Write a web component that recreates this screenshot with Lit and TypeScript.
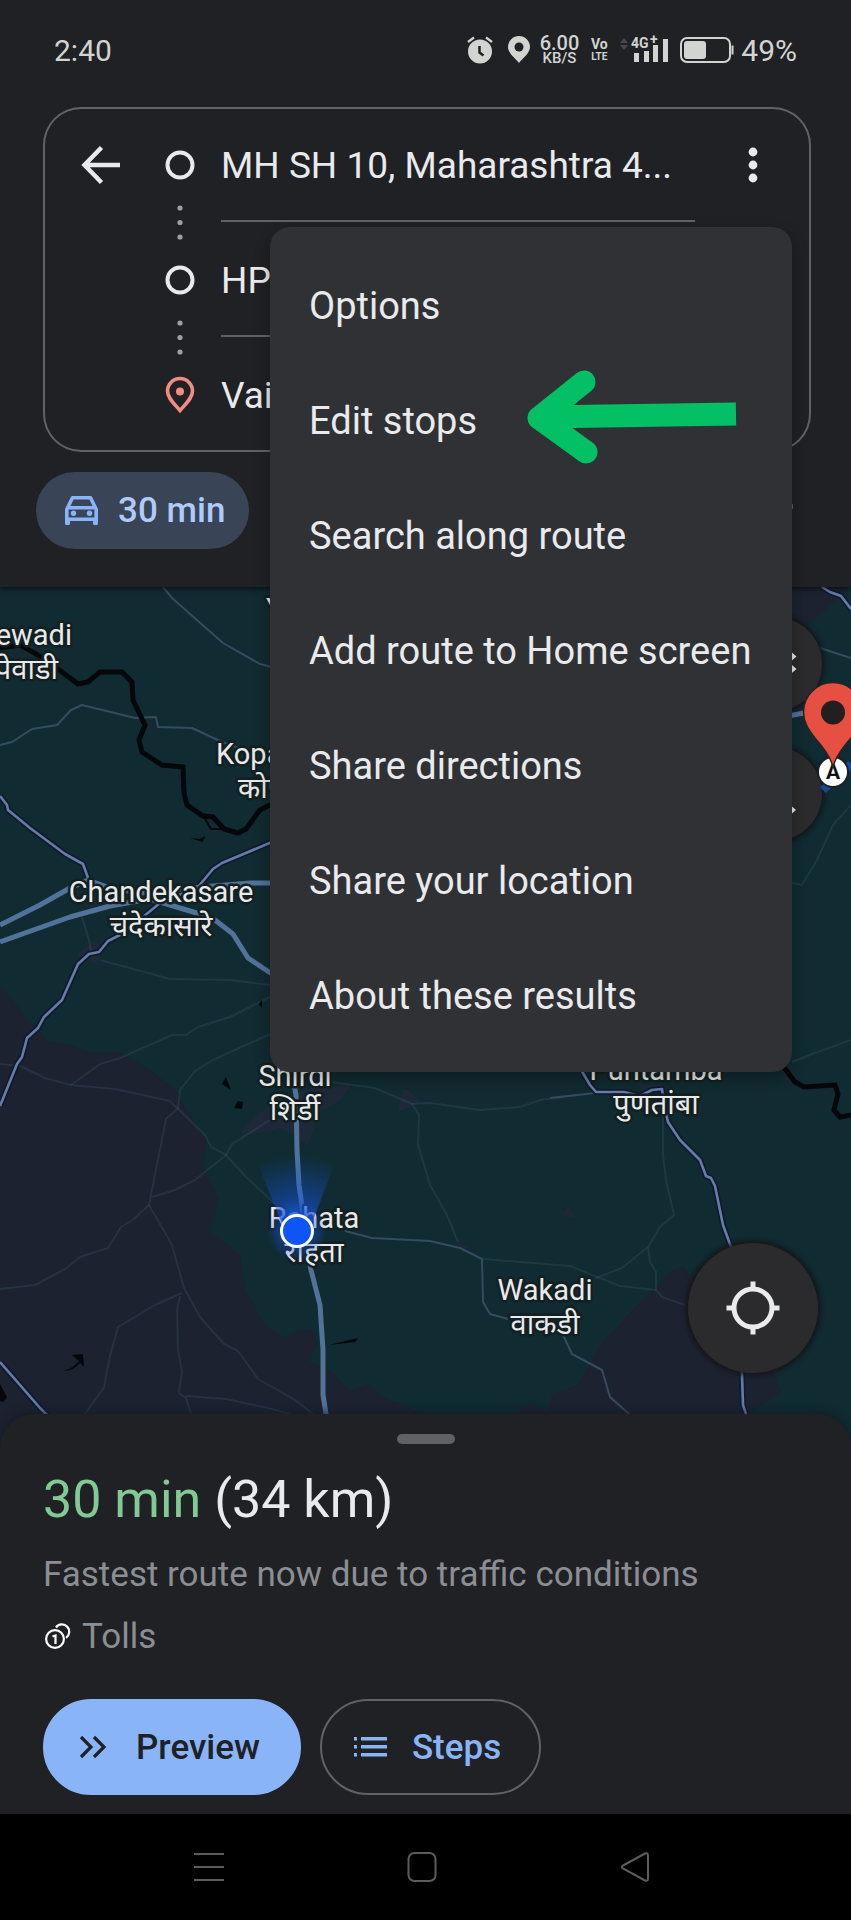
import { LitElement, html, svg, css } from "lit";
import { customElement, property } from "lit/decorators.js";

interface Place {
  name: string;
  local: string;
  x: number;
  y: number;
  localX?: number;
  anchor?: "start" | "middle" | "end";
}

const PLACES: Place[] = [
  { name: "ewadi", local: "पेवाडी", x: 72, localX: 58, y: 645, anchor: "end" },
  { name: "Kopa", local: "कोप", x: 216, localX: 238, y: 764, anchor: "start" },
  { name: "Chandekasare", local: "चंदेकासारे", x: 161, y: 902 },
  { name: "Shirdi", local: "शिर्डी", x: 295, y: 1086 },
  { name: "Puntamba", local: "पुणतांबा", x: 656, y: 1080 },
  { name: "Rahata", local: "राहता", x: 314, y: 1228 },
  { name: "Wakadi", local: "वाकडी", x: 545, y: 1300 },
];

const FAINT = [
  "M0 1064L20 1066L45 1078L71 1085L115 1089L170 1101L205 1135L211 1147L226 1155L245 1176L275 1204",
  "M71 1085L100 1064L120 1058L172 1035L186 1035L198 1027L230 1017L270 997",
  "M270 1034L213 1060L195 1071L180 1090L178 1108L166 1119L152 1190L149 1205L172 1245L184 1288L200 1317L224 1344L238 1351L258 1379L295 1400L313 1414",
  "M149 1205L134 1219L121 1227L108 1248L80 1257L65 1269L35 1285L0 1289",
  "M152 1197L175 1190L195 1180L226 1155L232 1144L270 1120",
  "M182 1293L155 1305L118 1327L109 1360L104 1387L85 1414",
  "M180 1296L177 1310L178 1350L182 1372L179 1393L186 1398L191 1414",
  "M186 1396L226 1399L268 1408L290 1414",
  "M330 1082L375 1088L412 1104L419 1115L418 1145L430 1185L447 1215L458 1242",
  "M412 1104L430 1103L480 1110L520 1107L540 1100L565 1097",
  "M663 1115L663 1155L666 1180L674 1215L660 1227L648 1247L622 1268L596 1278",
  "M483 1259L570 1266L620 1286L656 1290L662 1297L685 1305",
  "M648 1247L650 1262L656 1272L656 1290",
  "M792 1062L815 1053L851 1040",
  "M100 960L170 979L230 980L270 985",
  "M792 883L802 885L817 860L833 825L851 805",
  "M82 917L89 940L92 955",
];

const MINOR = [
  "M163 587L172 598L223 643L260 664L272 667",
  "M0 745L12 742L32 729L57 725L71 710L82 705L135 718L156 717L158 727L192 728L222 742L250 752",
  "M345 1231L372 1238L430 1241L460 1248L482 1259L483 1302L490 1314L508 1319",
  "M563 1335L572 1354L602 1370L610 1397L629 1414L640 1424",
  "M550 1098L595 1093",
  "M820 648L851 658",
];

const ROADS = [
  "M0 796L7 805L8 810L30 828L65 854L83 864L88 878",
  "M272 842L222 863L213 869L198 887L160 903L143 917L122 934L108 941L99 952L89 954L78 964L62 1000L44 1017L38 1028L27 1038L22 1057L17 1064L0 1106",
  "M580 1068L590 1085L596 1092L624 1092L640 1096L652 1090L662 1089L664 1105L668 1122L680 1140L700 1160L706 1176L711 1178L715 1186L723 1225L731 1247L738 1290L742 1375L743 1405L748 1420",
  "M0 1362L40 1408L52 1420",
  "M822 587L830 592L841 596L851 609",
];

const HIGHWAYS = [
  "M0 925L40 905L70 888L88 880L110 888L140 893L190 888L250 883L272 883",
  "M0 942L70 917L110 906L150 899L200 914L215 920L233 934L248 958L272 974",
  "M292 1072L296 1095L297 1150L299 1185L302 1206L306 1245L311 1270L320 1305L323 1350L323 1395L327 1420",
  "M788 716L804 713",
];

const RIVERS = [
  "M0 648L20 645L38 655L58 669L78 684L88 682L100 672L122 672L132 682L133 700L145 725L139 740L142 752L162 765L183 767L184 793L187 805L203 816L213 817L224 829L238 833L246 829L260 810L272 804",
  "M780 1062L795 1082L804 1087L835 1085L838 1094L834 1110L840 1117L851 1115",
];

@customElement("route-map")
export class RouteMap extends LitElement {
  static styles = css`
    :host {
      display: block;
      position: relative;
      overflow: hidden;
      background: #102b31;
    }
    .canvas {
      position: absolute;
      inset: 0;
      width: 100%;
      height: 100%;
      display: block;
    }
    .land { fill: #1c2230; }
    .town { fill: #1d2938; }
    .line { fill: none; stroke-linejoin: round; }
    .faint { stroke: #6c90ab; stroke-opacity: 0.14; stroke-width: 2; }
    .minor { stroke: #374b5e; stroke-width: 2; }
    .casing { stroke: #14182c; stroke-width: 6; }
    .road { stroke: #637da9; stroke-width: 2.6; }
    .highway { stroke: #527299; stroke-width: 5; }
    .river { stroke: #05070b; stroke-width: 5; stroke-linejoin: miter; }
    .stream { stroke: #05070b; stroke-width: 2; }
    .water { fill: #05070b; }
    .label {
      font: 29px Roboto, "Noto Sans", sans-serif;
      fill: #e8eaed;
      stroke: #14201f;
      stroke-width: 5px;
      stroke-linejoin: round;
      paint-order: stroke;
    }
    .local {
      font: 29px "Noto Sans", "Noto Sans Devanagari", sans-serif;
    }
    .round {
      position: absolute;
      display: grid;
      place-items: center;
      padding: 0;
      border: 0;
      border-radius: 50%;
      background: #2b2b2e;
      box-shadow: 0 0 4px 3px rgba(20, 20, 22, 0.8);
    }
    .small { width: 94px; height: 94px; right: 29px; }
    .layers { top: 30px; }
    .sound { top: 160px; }
    .locate { width: 130px; height: 130px; right: 33px; bottom: 73px; }
    .pin {
      position: absolute;
      right: 0;
      top: 90px;
      width: 56px;
      height: 120px;
    }
    .stop { font: 700 21px Roboto, sans-serif; fill: #111; }
  `;

  render() {
    const line = (kind: string) => (d: string) =>
      svg`<path class="line ${kind}" d=${d}></path>`;
    return html`
      <svg class="canvas" viewBox="0 587 851 859" preserveAspectRatio="xMidYMin slice" role="img" aria-label="Map">
        <defs>
          <radialGradient id="beam" gradientUnits="userSpaceOnUse" cx="297" cy="1231" r="78">
            <stop offset="0" stop-color="#1556e0" stop-opacity="0.9"></stop>
            <stop offset="0.5" stop-color="#1556e0" stop-opacity="0.4"></stop>
            <stop offset="1" stop-color="#1556e0" stop-opacity="0"></stop>
          </radialGradient>
          <radialGradient id="glow" gradientUnits="userSpaceOnUse" cx="297" cy="1231" r="30">
            <stop offset="0.5" stop-color="#1556e0" stop-opacity="0.5"></stop>
            <stop offset="1" stop-color="#1556e0" stop-opacity="0"></stop>
          </radialGradient>
        </defs>
        <path class="land" d="M0 985L12 1000L30 1022L48 1041L70 1045L90 1053L120 1052L150 1070L175 1090L190 1115L206 1140L203 1165L219 1200L210 1232L228 1245L240 1255L245 1290L265 1325L283 1338L300 1330L315 1331L317 1345L308 1362L330 1370L350 1390L368 1384L385 1398L420 1413V1450H0Z"></path>
        <path class="land" d="M645 1298L670 1272L683 1267L690 1275L775 1375L781 1392L745 1416L740 1450H518V1410L530 1404L547 1412L552 1395L578 1385L600 1345Z"></path>
        <path class="land" d="M785 587H851L811 623L785 622Z"></path>
        <path class="town" d="M242 1130L260 1112L300 1090L352 1084L340 1100L320 1112L308 1145L280 1128L245 1136L243 1150ZM400 1100L404 1088L413 1094L420 1102L398 1112ZM562 1215L568 1205L577 1218ZM455 1239L470 1248L463 1250ZM76 955L95 940L103 948L98 965ZM638 1083L660 1085L664 1092L642 1096Z"></path>
        ${FAINT.map(line("faint"))}
        ${MINOR.map(line("minor"))}
        ${RIVERS.map(line("river"))}
        <path class="water" d="M222 1084L226 1077L231 1090ZM234 1108L238 1101L243 1102L242 1109ZM259 1004L262 1000V1008ZM190 838L200 839L205 836L203 842ZM62 1371C70 1370 74 1366 79 1361L72 1355L83 1354L84 1367L80 1363C76 1368 70 1371 62 1371ZM0 1384L7 1397L3 1402L0 1401ZM329 1345L358 1338L355 1342Z"></path>
        <path class="line stream" d="M204 817L211 829H225"></path>
        ${ROADS.map(line("casing"))}
        ${ROADS.map(line("road"))}
        ${HIGHWAYS.map(line("highway"))}
        <text class="label" x="266" y="619">Y</text>
        ${PLACES.map(
          (p) => svg`
            <text class="label" x=${p.x} y=${p.y} text-anchor=${p.anchor ?? "middle"}>${p.name}</text>
            <text class="label local" x=${p.localX ?? p.x} y=${p.y + 34} text-anchor=${p.anchor ?? "middle"}>${p.local}</text>`
        )}
        <path d="M285 1231L256 1160Q297 1140 336 1160L309 1231Z" fill="url(#beam)"></path>
        <circle cx="297" cy="1231" r="30" fill="url(#glow)"></circle>
        <circle cx="297" cy="1231" r="15.5" fill="#0d55f4" stroke="#fff" stroke-width="3"></circle>
      </svg>
      <button class="round small layers" aria-label="Layers">
        <svg width="44" height="44" viewBox="0 0 44 44"><path d="M36 8V21L43.500 14.500ZM36 20.500V33.500L43.500 27Z" fill="#e8eaed"></path></svg>
      </button>
      <button class="round small sound" aria-label="Sound">
        <svg width="44" height="44" viewBox="0 0 44 44"><path d="M36 32V44L43 38Z" fill="#e8eaed"></path></svg>
      </button>
      <svg class="pin" viewBox="795 677 56 120" aria-hidden="true">
        <path d="M823 790L851 764" stroke="#174a96" stroke-width="8"></path>
        <circle cx="833" cy="772" r="15" fill="#fff" stroke="#1c2023" stroke-width="2"></circle>
        <text class="stop" x="833" y="779" text-anchor="middle">A</text>
        <path d="M833 768C832 758 822 746 815 738C808 729 803.500 722 803.500 712A29.500 29.500 0 0 1 862.500 712C862.500 722 858 729 851 738C844 746 834 758 833 768Z" fill="#e65042" stroke="#2a2323" stroke-width="1.500"></path>
        <circle cx="833" cy="712.500" r="12" fill="#231f20"></circle>
      </svg>
      <button class="round locate" aria-label="Your location">
        <svg width="54" height="54" viewBox="0 0 54 54" fill="none" stroke="#e8eaed" stroke-width="5">
          <circle cx="27" cy="27" r="19"></circle>
          <path d="M27 0.500V8M27 46V53.500M0.500 27H8M46 27H53.500"></path>
        </svg>
      </button>
    `;
  }
}

@customElement("overflow-menu")
export class OverflowMenu extends LitElement {
  @property({ attribute: false }) items: string[] = [];

  static styles = css`
    :host {
      display: block;
      box-sizing: border-box;
      width: 522px;
      padding: 20px 0;
      border-radius: 20px;
      background: #303134;
      box-shadow: 0 6px 16px rgba(0, 0, 0, 0.3);
    }
    .item {
      position: relative;
      display: block;
      width: 100%;
      height: 115px;
      padding: 2px 0 0 39px;
      border: 0;
      background: none;
      color: #e8eaed;
      font: 38px Roboto, sans-serif;
      text-align: left;
      white-space: nowrap;
    }
    .arrow {
      position: absolute;
      left: 256px;
      top: 8px;
    }
  `;

  render() {
    return html`${this.items.map(
      (item) => html`<button class="item" role="menuitem">
        ${item}${item === "Edit stops"
          ? html`<svg class="arrow" width="212" height="94" viewBox="526 370 212 94" fill="none" stroke="#03c064" stroke-width="23" aria-hidden="true">
              <path d="M584 382L539 418L586 452" stroke-linecap="round" stroke-linejoin="round"></path>
              <path d="M540 417L736 414"></path>
            </svg>`
          : null}
      </button>`
    )}`;
  }
}

@customElement("app-root")
export class AppRoot extends LitElement {
  private menu = [
    "Options",
    "Edit stops",
    "Search along route",
    "Add route to Home screen",
    "Share directions",
    "Share your location",
    "About these results",
  ];

  static styles = css`
    :host {
      display: flex;
      flex-direction: column;
      min-height: 100vh;
      background: #202124;
      color: #e8eaed;
      font-family: Roboto, sans-serif;
    }
    svg { display: block; flex: none; }
    button { font-family: inherit; }
    .header {
      position: relative;
      z-index: 2;
      padding-bottom: 38px;
      background: #202124;
      box-shadow: 0 1px 6px rgba(0, 0, 0, 0.7);
    }
    .status {
      display: flex;
      align-items: center;
      height: 100px;
      margin-bottom: 7px;
      padding: 0 54px;
      color: #d2d4d2;
      font-size: 30px;
    }
    .clock { flex: 1; }
    .indicators { display: flex; align-items: center; }
    .location { margin-left: 15px; }
    .rate {
      display: grid;
      justify-items: center;
      margin: 0 11px 0 10px;
      font-weight: 500;
      font-size: 20px;
      line-height: 16px;
    }
    .unit { font-size: 15px; line-height: 14px; }
    .volte {
      display: grid;
      width: 18px;
      justify-items: center;
      font-weight: 700;
      font-size: 14px;
      line-height: 13px;
    }
    .lte { font-size: 10px; line-height: 12px; }
    .signal { margin: 0 12px; overflow: visible; }
    .tech { font: 700 14px Roboto, sans-serif; fill: #d2d4d2; }
    .percent { margin-left: 7px; }
    .card {
      display: grid;
      grid-auto-rows: 115px;
      margin: 0 40px 0 43px;
      border-radius: 38px;
      box-shadow: inset 0 0 0 2px #5f6368;
    }
    .row {
      display: grid;
      grid-template-columns: 96px 82px 1fr 116px;
    }
    .icon {
      display: grid;
      place-items: center;
      padding: 0;
      border: 0;
      background: none;
    }
    .lead { justify-content: end; padding-right: 18px; }
    .stop {
      display: flex;
      align-items: center;
      min-width: 0;
      padding: 3px 0 0;
      border: 0;
      border-bottom: 2px solid #5f6368;
      background: none;
      color: #e8eaed;
      font-size: 37px;
      white-space: nowrap;
    }
    .row:last-child .stop { border-color: transparent; }
    .track { position: relative; }
    .dots {
      position: absolute;
      left: 50%;
      bottom: -18px;
      margin-left: -3px;
    }
    .modes {
      display: flex;
      align-items: center;
      justify-content: space-between;
      margin-top: 20px;
      padding: 0 58px 0 36px;
    }
    .chip {
      display: flex;
      align-items: center;
      gap: 20px;
      height: 77px;
      padding: 0 24px 0 29px;
      border: 0;
      border-radius: 39px;
      background: #394457;
      color: #aecbfa;
      font-size: 35px;
      font-weight: 500;
    }
    .more { width: 3px; height: 5px; margin-bottom: 8px; border-radius: 1px; background: #5f6368; }
    overflow-menu {
      position: absolute;
      top: 227px;
      right: 59px;
    }
    route-map { flex: 1 0 859px; }
    .sheet {
      position: relative;
      z-index: 1;
      margin-top: -32px;
      padding: 20px 43px 19px;
      border-radius: 34px 34px 0 0;
      background: #202124;
      box-shadow: 0 -2px 10px rgba(18, 24, 38, 0.7);
    }
    .handle {
      width: 58px;
      height: 10px;
      margin: 0 auto 26px;
      border-radius: 5px;
      background: #606166;
    }
    .summary {
      margin: 0 0 14px;
      font-size: 52px;
      line-height: 60px;
      font-weight: 400;
    }
    .time { color: #81c995; }
    .note { margin: 0; color: #8b8e93; font-size: 35px; line-height: 62px; white-space: nowrap; }
    .tolls { display: flex; align-items: center; gap: 11px; }
    .actions { display: flex; gap: 19px; margin-top: 31px; }
    .action {
      display: flex;
      align-items: center;
      height: 96px;
      border: 2px solid #8ab4f8;
      border-radius: 48px;
      background: #8ab4f8;
      color: #202124;
      font-size: 35px;
      font-weight: 500;
    }
    .preview { gap: 29px; padding: 0 39px 0 34px; }
    .steps { gap: 25px; padding: 0 38px 0 32px; border-color: #5f6368; background: none; color: #8ab4f8; }
    .nav {
      display: flex;
      align-items: center;
      justify-content: space-around;
      height: 106px;
      padding: 0 109px 0 102px;
      background: #000;
      position: relative;
      z-index: 1;
      box-sizing: border-box;
    }
  `;

  private stop(label: string, index: number) {
    return html`<div class="row">
      ${index === 0
        ? html`<button class="icon lead" aria-label="Back">
            <svg width="40" height="40" viewBox="0 0 40 40" fill="none" stroke="#e8eaed" stroke-width="4.500"><path d="M20.500 2.500L3.500 20L20.500 37.500M4 20H39"></path></svg>
          </button>`
        : html`<span></span>`}
      <div class="icon track">
        ${index < 2
          ? html`<svg width="30" height="30" viewBox="0 0 30 30"><circle cx="15" cy="15" r="12.500" fill="none" stroke="#e8eaed" stroke-width="4"></circle></svg>
              <svg class="dots" width="6" height="36" viewBox="0 0 6 36" fill="#9aa0a6"><circle cx="3" cy="4" r="2.600"></circle><circle cx="3" cy="18.500" r="2.600"></circle><circle cx="3" cy="33" r="2.600"></circle></svg>`
          : html`<svg width="30" height="38" viewBox="0 0 30 38"><path d="M15 34.500C9 27.500 2.500 22 2.500 15A12.500 12.500 0 0 1 27.500 15C27.500 22 21 27.500 15 34.500Z" fill="none" stroke="#f28b82" stroke-width="3.600"></path><circle cx="15" cy="15.500" r="4" fill="#f28b82"></circle></svg>`}
      </div>
      <button class="stop">${label}</button>
      ${index === 0
        ? html`<button class="icon" aria-label="More options">
            <svg width="10" height="36" viewBox="0 0 10 36" fill="#e8eaed"><circle cx="5" cy="5" r="4.400"></circle><circle cx="5" cy="18" r="4.400"></circle><circle cx="5" cy="31" r="4.400"></circle></svg>
          </button>`
        : null}
    </div>`;
  }

  render() {
    return html`
      <header class="header">
        <div class="status">
          <span class="clock">2:40</span>
          <div class="indicators">
            <svg width="26" height="28" viewBox="0 0 26 28" aria-label="Alarm"><circle cx="13" cy="15.500" r="12" fill="#d2d4d2"></circle><path d="M1 6L7 1.500M25 6L19 1.500" stroke="#d2d4d2" stroke-width="2.200"></path><path d="M12.500 10V16.500L16.500 19.500" fill="none" stroke="#202124" stroke-width="2.500"></path></svg>
            <svg class="location" width="22" height="28" viewBox="0 0 22 28" aria-label="Location"><path d="M11 27C7 22 0 17 0 11A11 11 0 0 1 22 11C22 17 15 22 11 27Z" fill="#d2d4d2"></path><circle cx="11" cy="11" r="4.500" fill="#202124"></circle></svg>
            <div class="rate"><span>6.00</span><span class="unit">KB/S</span></div>
            <div class="volte"><span>Vo</span><span class="lte">LTE</span></div>
            <svg class="signal" width="48" height="28" viewBox="0 0 48 28">
              <path d="M0 7L4 2L8 7ZM0 9L4 14L8 9Z" fill="#46484a"></path>
              <path d="M14 17h5v9h-5zM24 15h5v11h-5zM33 9h5v17h-5zM43 3h5v23h-5z" fill="#d2d4d2"></path>
              <text class="tech" x="11" y="12">4G</text><text class="tech" x="30" y="8">+</text>
            </svg>
            <svg width="54" height="26" viewBox="0 0 54 26" aria-label="Battery"><rect x="1" y="1" width="49" height="24" rx="6" fill="none" stroke="#d2d4d2" stroke-width="2"></rect><rect x="4" y="4" width="22" height="18" rx="3" fill="#d2d4d2"></rect><path d="M52.500 8.500V17.500" stroke="#d2d4d2" stroke-width="2"></path></svg>
            <span class="percent">49%</span>
          </div>
        </div>
        <div class="card">
          ${["MH SH 10, Maharashtra 4...", "HP", "Vai"].map((s, i) => this.stop(s, i))}
        </div>
        <div class="modes">
          <button class="chip">
            <svg width="33" height="29" viewBox="0 0 33 29"><path fill="#8ab4f8" fill-rule="evenodd" d="M5.500 1.800C5.900 0.600 6.600 0 7.800 0H25.200C26.400 0 27.100 0.600 27.500 1.800L33 13V27.500Q33 29 31.500 29H29.500Q28 29 28 27.500V25H5V27.500Q5 29 3.500 29H1.500Q0 29 0 27.500V13ZM8.600 3.600L5.500 10H27.500L24.400 3.600ZM3.600 13.400V21.600H29.400V13.400Z"></path><circle cx="8.500" cy="17.300" r="2.700" fill="#8ab4f8"></circle><circle cx="24.500" cy="17.300" r="2.700" fill="#8ab4f8"></circle></svg>
            30 min
          </button>
          <span class="more"></span>
        </div>
        <overflow-menu role="menu" .items=${this.menu}></overflow-menu>
      </header>
      <route-map></route-map>
      <section class="sheet">
        <div class="handle"></div>
        <h1 class="summary"><span class="time">30 min</span> (34 km)</h1>
        <p class="note">Fastest route now due to traffic conditions</p>
        <p class="note tolls">
          <svg width="28" height="28" viewBox="-2 0 28 28" fill="none" stroke="#fff" stroke-width="2.200"><circle cx="10" cy="16" r="8.900"></circle><path d="M11 4.500A7.300 7.300 0 1 1 21 14.800M7.500 13.500L10.500 12.500V21"></path></svg>
          Tolls
        </p>
        <div class="actions">
          <button class="action preview">
            <svg width="28" height="24" viewBox="0 0 28 24" fill="none" stroke="#202124" stroke-width="3.200"><path d="M2 2L12 12L2 22M15 2L25 12L15 22"></path></svg>
            Preview
          </button>
          <button class="action steps">
            <svg width="33" height="20" viewBox="0 0 33 20" fill="#8ab4f8"><path d="M0 0h3v3.500h-3zM7 0h26v3.500h-26zM0 8h3v3.500h-3zM7 8h26v3.500h-26zM0 16h3v3.500h-3zM7 16h26v3.500h-26z"></path></svg>
            Steps
          </button>
        </div>
      </section>
      <nav class="nav">
        <button class="icon" aria-label="Recent apps"><svg width="30" height="30" viewBox="0 0 30 30" stroke="#5c5c5c" stroke-width="2"><path d="M0 2H30M0 15H30M0 28H30"></path></svg></button>
        <button class="icon" aria-label="Home"><svg width="30" height="30" viewBox="0 0 30 30" fill="none" stroke="#5c5c5c" stroke-width="2"><rect x="1.500" y="1" width="27" height="28" rx="6"></rect></svg></button>
        <button class="icon" aria-label="Back"><svg width="30" height="30" viewBox="0 0 30 30" fill="none" stroke="#5c5c5c" stroke-width="2"><path d="M3 13.500L25 1.500Q28 0.500 28 3.500V26.500Q28 29.500 25 28.500L3 16.500Q0.500 15 3 13.500Z"></path></svg></button>
      </nav>
    `;
  }
}
